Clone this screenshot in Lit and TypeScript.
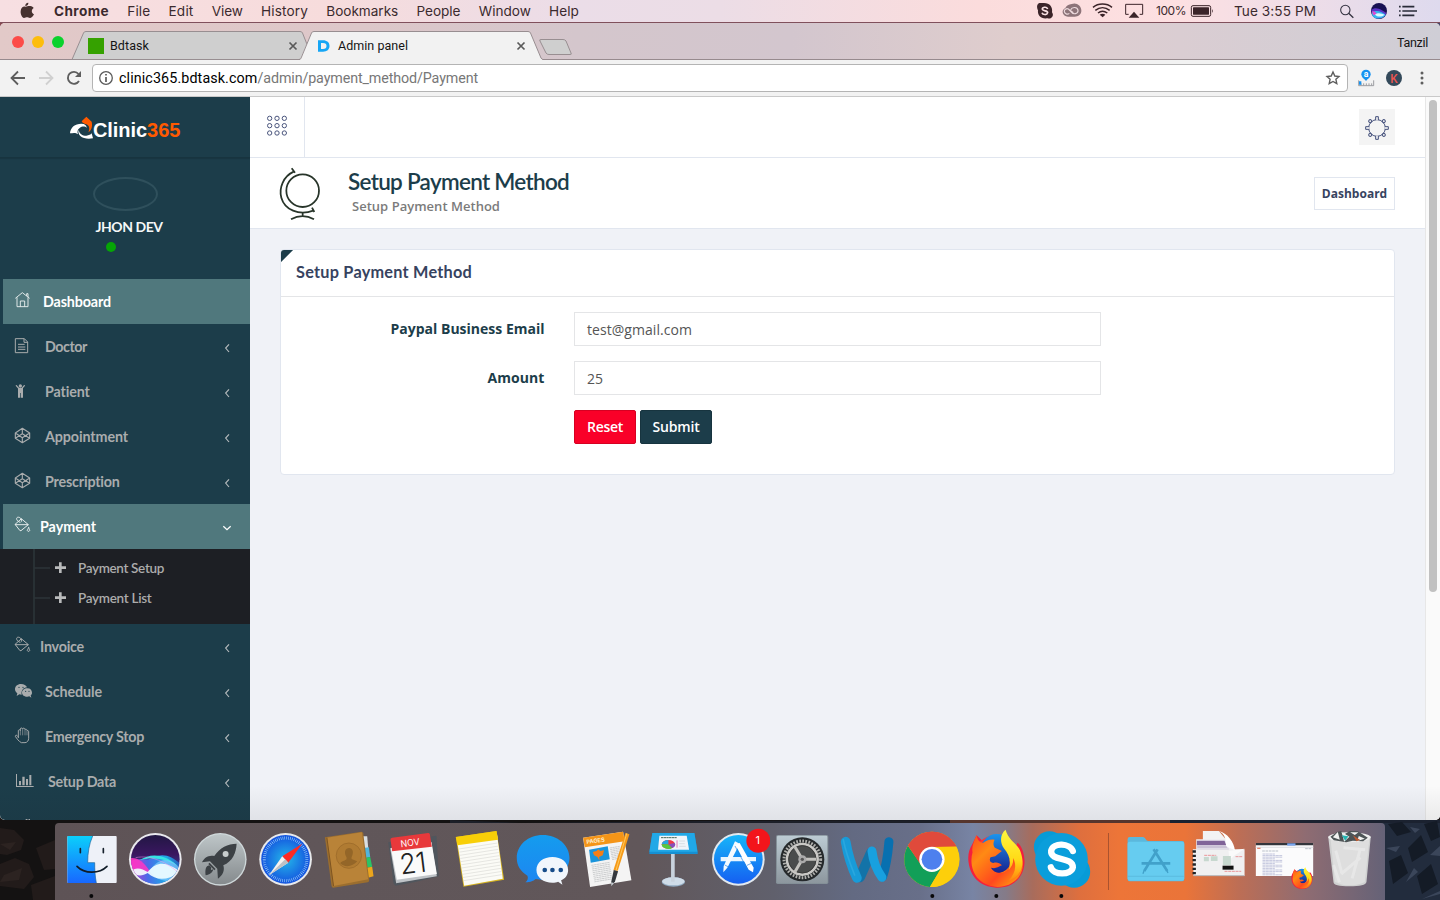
import { LitElement, html, svg, css } from "lit";
import { customElement } from "lit/decorators.js";

const MENUS: [string, number][] = [
  ["Chrome", 55], ["File", 23], ["Edit", 25], ["View", 31], ["History", 47],
  ["Bookmarks", 72], ["People", 44], ["Window", 52], ["Help", 30],
];

/* Artwork is drawn on a grid of three units per pixel. */
const art = (x: number, y: number, w: number, h: number, body: unknown, cls = "") => html`
  <svg class=${cls} width=${w} height=${h} viewBox="${x} ${y} ${w * 3} ${h * 3}" fill="none">${body}</svg>`;

const codepen = (dy: number) => svg`<g transform="translate(0 ${dy})" stroke="#a9acad" stroke-width="3.400" stroke-linejoin="round">
  <path d="M67 325 89 339V355L67 368 46 355V339ZM46 339 67 353 89 339M46 355 67 341 89 355M67 325V341M67 353V368M46 339V355M89 339V355"/></g>`;
const bucket = (dy: number, c: string) => svg`<g transform="translate(0 ${dy})" stroke=${c} stroke-width="2.900" stroke-linejoin="round" stroke-linecap="round">
  <path d="M65 597 85 614 63 632H60L46 614ZM46 614H84M60 607C54 605 49 600 50 595 51 590 61 590 64 598M64 598V604"/><path d="M86 623C83 628 82 630 82 632A4 4 0 0 0 89 632C89 630 88 627 86 623Z"/></g>`;

interface Row { t: string; x: number; w: number; vy: number; icon: unknown; active?: boolean; open?: boolean; arrow?: boolean }
const G = "#a9acad";
const ROWS: Row[] = [
  { t: "Dashboard", x: 43, w: 68, vy: 549, active: true, icon: svg`<path stroke="#e8efef" stroke-width="2.800" d="M46 607 67 590 89 607M51 604V632H84V604M61 632V615H74V632M80 600V593H84V603"/>` },
  { t: "Doctor", x: 45, w: 42, vy: 12, arrow: true, icon: svg`<path stroke=${G} stroke-width="3" d="M46 56H73L83 66V98H46ZM72 56V67H83"/><path stroke=${G} stroke-width="3" d="M54 73H74M54 81H76M54 88H76"/>` },
  { t: "Patient", x: 45, w: 45, vy: 147, arrow: true, icon: svg`<circle cx="61" cy="198" r="5" fill=${G}/><path stroke=${G} stroke-width="4" stroke-linecap="round" d="M49 197 57 206H65L73 197"/><path fill=${G} d="M54 204H69V233H62.500V219H60.500V233H54Z"/>` },
  { t: "Appointment", x: 45, w: 83, vy: 282, arrow: true, icon: codepen(0) },
  { t: "Prescription", x: 45, w: 75, vy: 417, arrow: true, icon: codepen(135) },
  { t: "Payment", x: 40, w: 56, vy: 552, active: true, open: true, arrow: true, icon: bucket(0, "#e8efef") },
  { t: "Invoice", x: 40, w: 44, vy: 237, arrow: true, icon: bucket(-315, G) },
  { t: "Schedule", x: 45, w: 57, vy: 372, arrow: true, icon: svg`<path fill=${G} d="M63 417C52 417 45 424 45 433 45 438 48 442 52 445L50 453 58 448C60 449 62 449 65 449 63 436 70 428 81 427 79 421 72 417 63 417Z"/><path fill=${G} d="M82 430C73 430 66 436 66 443S73 455 82 455L88 454 94 458 92 451C95 449 96 446 96 443 96 436 91 430 82 430Z"/><g fill="#1c3d4a"><circle cx="57" cy="427" r="2"/><circle cx="69" cy="427" r="2"/><circle cx="77" cy="439" r="1.8"/><circle cx="87" cy="439" r="1.8"/></g>` },
  { t: "Emergency Stop", x: 45, w: 99, vy: 507, arrow: true, icon: svg`<path stroke=${G} stroke-width="2.900" stroke-linejoin="round" stroke-linecap="round" d="M55 577V558C55 553 61 553 61 557V552C61 548 67 548 68 552 69 548 75 549 75 554 77 551 81 553 81 557 84 555 86 558 86 561V580C86 587 81 593 75 593H64C57 590 50 580 46 574 46 569 52 569 55 577Z"/><path stroke=${G} stroke-width="1.800" d="M61 557V571M68 552V571M75 554V571M81 558V571"/>` },
  { t: "Setup Data", x: 48, w: 68, vy: 642, arrow: true, icon: svg`<path fill=${G} d="M48 687H51V723H101V726H48ZM57 708H63V721H57ZM67 695H74V721H67ZM78 702H84V721H78ZM88 690H94V721H88Z"/>` },
];

const ffx = svg`
  <path fill="#f4203c" d="M741 61 727 90C719 103 714 120 717 142 722 184 751 216 800 218 852 220 883 185 885 143 886 119 877 92 864 83L848 122 788 105Z"/>
  <circle cx="800" cy="130" r="70" fill="url(#fxr)"/>
  <ellipse cx="801" cy="116" rx="51" ry="59" fill="url(#fxb)"/>
  <path fill="url(#fxo)" d="M741 61C744 76 750 82 760 84 769 77 782 71 795 74 791 82 790 91 796 98L817 108 797 124 783 127C778 136 782 143 791 144 801 141 810 143 817 151 804 157 798 162 784 158 790 169 802 176 818 173 838 169 842 151 840 134L859 99C881 126 888 156 868 185 839 225 778 224 748 193 727 172 721 140 729 112 726 100 731 82 741 61Z"/>
  <path fill="url(#fxy)" d="M828 44C812 58 810 80 823 100 838 118 847 139 837 165 848 155 852 142 851 129 863 154 856 178 837 197 874 184 887 151 874 113 866 86 838 79 828 44Z"/>`;

const DOCK: { cx: number; art: unknown; run?: boolean }[] = [
  { cx: 0, run: true, art: svg`<rect x="201" y="63" width="148" height="141" rx="3" fill="#eef1f8"/><path d="M204 63H277C266 88 262 114 262 143H283C283 164 284 184 288 204H204Q201 204 201 201V66Q201 63 204 63Z" fill="url(#fin)"/><path d="M277 63C266 88 262 114 262 143H283C283 164 284 184 288 204" stroke="#18649c" stroke-width="2"/><path d="M240 101V113M309 101V113" stroke="#16202c" stroke-width="5" stroke-linecap="round"/><path d="M230 154C252 177 297 177 320 154" stroke="#101c28" stroke-width="5" stroke-linecap="round"/>` },
  { cx: 0, art: svg`<circle cx="467" cy="133" r="79" fill="#e9e9ee"/><circle cx="467" cy="133" r="73" fill="url(#siri)"/><g clip-path="url(#siriclip)"><path d="M390 138C420 128 440 138 462 128 490 112 520 125 545 150V210H390Z" fill="url(#siriw)"/><path d="M390 130C412 126 432 140 450 168 430 180 410 184 390 178Z" fill="#ff37c4" opacity=".85"/><path d="M420 136C455 112 500 118 540 158 520 140 470 120 420 136Z" fill="#35e3e2"/><path d="M450 168C480 120 515 128 545 166V186C510 208 470 198 450 168Z" fill="#7cc8ff" opacity=".75"/><path d="M392 170C410 153 428 162 444 171 475 133 505 143 542 170 503 198 470 198 444 174 425 186 408 182 392 170Z" fill="#effdff" opacity=".92"/><path d="M408 128C455 118 505 145 535 172" stroke="#ff8bea" stroke-width="2" opacity=".7"/></g>` },
  { cx: 0, art: svg`<circle cx="661" cy="133" r="79" fill="#cfd8da"/><circle cx="661" cy="133" r="75" fill="url(#lp)"/><path fill="#3c4145" d="M710 86C684 86 659 98 643 123 626 119 613 128 606 142L630 139 652 161 654 191C669 181 675 166 670 151 698 139 709 113 710 86Z"/><circle cx="677" cy="117" r="9" fill="#c7cccd"/><path d="M628 151C617 153 615 165 617 181 629 179 638 173 640 163L633 165 634 157Z" fill="#3c4145"/><path d="M627 145 645 164" stroke="#3c4145" stroke-width="5"/>` },
  { cx: 0, art: svg`<circle cx="856" cy="133" r="79" fill="#e8eaec"/><circle cx="856" cy="133" r="73" fill="url(#saf)"/><circle cx="856" cy="133" r="64" stroke="#b9e5ff" stroke-width="9" stroke-dasharray="1.5 4.2"/><path d="M906 86 846 124 864 143Z" fill="#ff2a22"/><path d="M806 181 846 124 864 143Z" fill="#f6f3ef"/><path d="M806 181 855 133 864 143Z" fill="#bdc1c5"/>` },
  { cx: 0, art: svg`<path d="M1089 64H1103L1106 99 1092 102Z" fill="#d9dee2"/><path d="M1093 99 1108 97 1112 126 1097 130Z" fill="#51b5dc"/><path d="M1097 128 1112 126 1118 155 1099 158Z" fill="#2bc466"/><path d="M1101 158 1118 155 1122 184 1103 189Z" fill="#eba51d"/><path d="M976 67 1086 50Q1090 50 1091 55L1109 195Q1109 200 1105 202L1001 218Q997 218 996 213Z" fill="#9b6e2f"/><path d="M982 68 1087 52 1106 193 1002 213Z" fill="#b98338"/><path d="M982 68 1002 213" stroke="#7e5420" stroke-width="3"/><circle cx="1048" cy="122" r="38" stroke="#9c6b2a" stroke-width="2.500" fill="#b07b32"/><path d="M1022 145C1025 138 1036 138 1041 133V127C1031 109 1039 100 1048 99 1060 100 1064 111 1056 127V132L1073 139C1060 156 1034 158 1022 145Z" fill="#946628"/>` },
  { cx: 370, art: svg`<path d="M55 82 200 62 207 184Q140 202 77 212L71 206Z" fill="#50565d"/><path d="M61 100 184 80 201 184 79 205Z" fill="#bfc3c7"/><path d="M63 99 185 82 201 177 81 194Z" fill="#fafafa"/><path d="M62 74Q61 69 67 68L175 54Q179 54 180 58L186 95 67 109Z" fill="#e8393b"/><text x="122" y="93" transform="rotate(-7 122 93)" text-anchor="middle" font-family="Inter" font-size="28" textLength="57" lengthAdjust="spacingAndGlyphs" fill="#fff">NOV</text><text x="133" y="174" transform="rotate(-7 133 174)" text-anchor="middle" font-family="Inter" font-weight="300" font-size="84" textLength="80" lengthAdjust="spacingAndGlyphs" fill="#222">21</text>` },
  { cx: 370, art: svg`<path d="M257 66 379 48 402 194 280 215Z" fill="#d7b520"/><path d="M261 78 381 61 398 191 282 212Z" fill="#fbfbf6"/><path d="M257 66 379 48 384 74 262 91Z" fill="#f8cf08"/><g stroke="#d1d0cd" stroke-width="1.5">${Array.from({ length: 11 }, (_, i) => svg`<path d="M${266 + i * 1.4} ${102 + i * 9.5}L${382 + i * 1.3} ${84 + i * 9.5}"/>`)}</g>` },
  { cx: 370, art: svg`<path d="M520 60C476 60 442 90 442 129 442 152 454 170 474 182 477 191 474 197 468 202 484 202 493 197 499 192 551 203 600 173 600 129 600 90 564 60 520 60Z" fill="url(#msg)"/><path d="M549 126C522 126 501 142 501 165S522 203 549 203C556 203 561 202 566 200L579 209 575 196C589 190 596 179 596 165 596 142 576 126 549 126Z" fill="#f1f6fc"/><g fill="#164c8a"><circle cx="526" cy="165" r="7"/><circle cx="549" cy="165" r="7"/><circle cx="574" cy="165" r="7"/></g>` },
  { cx: 370, art: svg`<path d="M640 68 760 50 785 196 661 216Z" fill="#f4f4f4"/><path d="M640 68 760 50 765 79 645 97Z" fill="#f49518"/><text x="651" y="87" transform="rotate(-8 651 87)" font-family="Inter" font-weight="600" font-size="17" textLength="55" fill="#fff5dd">PAGES</text><path d="M658 104 714 94 720 133 663 143Z" fill="#1995dc"/><path d="M669 111 680 108 686 103 691 108 703 106 699 121 688 126 690 138 683 126 673 121Z" fill="#f57e16"/><g stroke="#b7b9bb" stroke-width="2" stroke-dasharray="7 1">${Array.from({ length: 8 }, (_, i) => svg`<path d="M${720 + i} ${99 + i * 5}L750 ${94 + i * 5}"/>`)}${Array.from({ length: 10 }, (_, i) => svg`<path d="M${665 + i} ${151 + i * 5.5}L${720 + i} ${142 + i * 5.5}"/>`)}</g><path d="M767 54 779 58 744 167 731 166Z" fill="#f69a18"/><path d="M771 55 739 165" stroke="#ffc85b" stroke-width="3"/><path d="M732 165 745 169 736 199 726 214 724 203Z" fill="#34383d"/><path d="M724 202 733 204 725 214Z" fill="#c9ced2"/>` },
  { cx: 370, art: svg`<ellipse cx="910" cy="201" rx="35" ry="14" fill="#90aac1"/><ellipse cx="910" cy="199" rx="34" ry="12" fill="#cfdce8"/><path d="M903 115H914V200H903Z" fill="#c8d2dd"/><path d="M847 54H973L983 111V117H838V111Z" fill="#1590d3"/><path d="M847 54H973L982 110H838Z" fill="#21a8e7"/><path d="M868 62H950L957 104H864Z" fill="#f1f5fa"/><path d="M873 68H920" stroke="#465" stroke-width="3" stroke-dasharray="7 1"/><ellipse cx="895" cy="88" rx="20" ry="13" fill="#ef394a"/><path d="M895 88V75A20 13 0 0 0 875 88Z" fill="#27a6e1"/><path d="M895 88H875A20 13 0 0 0 907 99Z" fill="#55c93f"/><path d="M895 88 907 99A20 13 0 0 0 914 84Z" fill="#8650bc"/><path d="M921 76V98" stroke="#e678b8" stroke-width="3"/><path d="M927 78H945M927 86H944M927 94H947" stroke="#cdd3d9" stroke-width="2"/>` },
  { cx: 730, art: svg`<circle cx="24" cy="133" r="79" fill="#e2e9ef"/><circle cx="24" cy="133" r="73" fill="url(#aps)"/><path d="M-29 126H77V139H-29Z" fill="#e8f5ff"/><path d="M14 79 28 86-9 158-21 172-20 153Z" fill="#f4faff"/><path d="M16 91 28 84 70 158 68 172 55 164Z" fill="#fff"/><path d="M14 93 52 164M-17 150-5 156M50 151 65 144" stroke="#2582df" stroke-width="2"/><circle cx="84" cy="77" r="36" fill="#f3151b"/><text x="82" y="88" text-anchor="middle" font-family="Inter" font-size="33" fill="#fff">1</text>` },
  { cx: 730, art: svg`<rect x="139" y="60" width="157" height="147" rx="5" fill="#849098"/><rect x="142" y="62" width="151" height="142" rx="4" fill="url(#sys)"/><circle cx="218" cy="133" r="66" fill="#25292b"/><circle cx="218" cy="133" r="55" stroke="#b0b0ad" stroke-width="9" stroke-dasharray="5 4.2"/><circle cx="218" cy="133" r="46" fill="#4a4c4c" stroke="#c9c8c5" stroke-width="8"/><circle cx="218" cy="133" r="41" stroke="#3a3b3a" stroke-width="3"/><path d="M218 133H260M218 133 196 96M218 133 196 170" stroke="#c2c1bd" stroke-width="9"/><circle cx="218" cy="133" r="12" fill="#aaa"/><circle cx="218" cy="133" r="5" fill="#555"/>` },
  { cx: 730, art: svg`<g stroke-linecap="round" stroke-linejoin="round"><path d="M423 113 390 187" stroke="#1373a8" stroke-width="30"/><path d="M477 80C474 117 469 153 458 185" stroke="#0870b0" stroke-width="27"/><path d="M347 80C354 120 365 156 381 189" stroke="#189bd8" stroke-width="29"/><path d="M426 108C430 139 440 165 456 187" stroke="#18a0df" stroke-width="27"/><path d="M340 74C347 112 360 145 374 180" stroke="#2aa7de" stroke-width="5"/></g>` },
  { cx: 730, run: true, art: svg`<circle cx="605" cy="133" r="83" fill="#fbce09"/><path d="M605 133 533 92A83 83 0 0 1 678 94L605 96Z" fill="#df4a3b"/><path d="M533 92A83 83 0 0 0 599 216L638 151 605 133 574 151Z" fill="#129f58"/><path d="M605 96H678A83 83 0 0 1 599 216L638 151Z" fill="#fdcf0b"/><path d="M533 92A83 83 0 0 1 678 94H605L572 150Z" fill="#e04a3b"/><circle cx="605" cy="133" r="38" fill="#fff"/><circle cx="605" cy="133" r="31" fill="#4d80ee"/>` },
  { cx: 730, run: true, art: ffx },
  { cx: 730, run: true, art: svg`<circle cx="959" cy="96" r="47" fill="#079bd7"/><circle cx="1033" cy="170" r="48" fill="#079bd7"/><circle cx="995" cy="133" r="79" fill="#0a9edb"/><path d="M1029 108C1021 85 970 81 964 107 960 141 1029 123 1029 157 1025 182 969 181 963 157" stroke="#fff" stroke-width="19" stroke-linecap="round"/>` },
];
const DOCK2: { cx: number; art: unknown }[] = [
  { cx: 1090, art: svg`<path d="M112 73Q112 66 119 66H158C166 66 166 78 175 78H276Q282 78 282 84V192Q282 199 276 199H118Q112 199 112 193Z" fill="#5bb8dd"/><path d="M112 86Q112 80 119 80H276Q282 80 282 87V190Q282 197 276 197H118Q112 197 112 190Z" fill="#66ccf0"/><path d="M113 184H281" stroke="#56b5d9" stroke-width="2"/><g stroke="#41a1ca" stroke-width="8"><path d="M154 145H240M202 103 162 168M190 103 231 168"/><path d="M162 166 158 176M230 166 233 174" stroke-width="4"/></g>` },
  { cx: 1090, art: svg`<path d="M340 48H388L436 105V173H340Z" fill="#f2f2f3"/><path d="M320 73H407L421 112V170H320Z" fill="#eceaf0"/><path d="M322 77H405L410 91H322Z" fill="#806498"/><path d="M323 96H413M323 103H418" stroke="#a99abb" stroke-width="3"/><path d="M310 103H465V183H312Z" fill="#f0f0f1"/><path d="M312 182H465" stroke="#b5b2b5" stroke-width="3"/><path d="M387 48C408 57 409 76 410 94L436 106C434 83 414 53 387 48Z" fill="#fff"/><path d="M417 108 465 101C450 112 428 123 420 137Z" fill="#fafafa"/><path d="M314 106V180" stroke="#202326" stroke-width="10" stroke-dasharray="7 6"/><path d="M344 121H380M405 169H455M438 125H459" stroke="#e9979a" stroke-width="3" stroke-dasharray="9 2"/><path d="M343 126H358V139H343ZM364 124H384V138H364ZM400 123H424V150H400Z" fill="#c7d8cf"/><path d="M399 152H432V164H399Z" fill="#111"/>` },
  { cx: 1090, art: svg`<path d="M498 84H670V183H498Z" fill="#fbfbfc"/><path d="M498 84H670V91H498Z" fill="#33353b"/><path d="M592 85H617V92H592Z" fill="#7ba7f1"/><path d="M498 97H670" stroke="#e3e4e7" stroke-width="4"/><path d="M502 100H512" stroke="#e5856d" stroke-width="4"/><path d="M517 108H567M646 101H665" stroke="#b9c0ca" stroke-width="3" stroke-dasharray="8 2"/><g stroke="#a9adcf" stroke-width="2" stroke-dasharray="9 1">${Array.from({ length: 14 }, (_, i) => svg`<path d="M518 ${117 + i * 4.8}H${i % 3 ? 578 : 555}"/>`)}</g><g transform="translate(336 140) scale(.375)">${ffx}</g>` },
  { cx: 1090, art: svg`<path d="M714 64H842L829 201Q826 214 778 214T730 201Z" fill="#cfd0d0"/><path d="M721 68H838L824 201Q804 211 778 211T734 200Z" fill="#dedede"/><ellipse cx="778" cy="67" rx="63" ry="15" fill="#eee"/><path d="M721 65 741 51 753 48 763 58 779 48 803 49 833 68 819 79 788 77 768 82 731 76Z" fill="#4d5456"/><path d="M728 67 743 51 749 74ZM754 50 778 65 762 80ZM780 52 805 52 794 60ZM806 63 824 71 801 78Z" fill="#f1f2f1"/><path d="M755 61 775 64 765 77Z" fill="#25b4b1"/><path d="M788 61 810 75 799 79Z" fill="#bb5931"/><path d="M737 107 755 174M753 177 811 128M760 98 825 104M811 100 786 190M730 150 748 202" stroke="#f4f4f4" stroke-width="9" opacity=".4"/>` },
];

@customElement("app-root")
export class AppRoot extends LitElement {
  static styles = css`
    :host { display: block; width: 1440px; height: 900px; overflow: hidden; font-family: "Open Sans", sans-serif; }
    * { box-sizing: border-box; }
    svg { display: block; flex: none; }
    .screen { display: flex; flex-direction: column; height: 900px; position: relative; background: linear-gradient(90deg, #884850, #96565b 60%, #48476a) top / 100% 60px no-repeat, #1d1918; }
    .menubar { height: 23px; display: flex; justify-content: space-between; background: linear-gradient(90deg, #f7dfe2 0, #f7dcdc 23%, #ebdde8 40%, #ecdde6 50%, #fbdcdc 68%, #fde0e2 82%, #dedaee 100%); border-bottom: 1px solid #80505c; color: #3b2a2e; font-family: "Inter", sans-serif; font-size: 13.6px; line-height: 22px; white-space: nowrap; }
    .menus { display: flex; gap: 18.25px; }
    .apple { margin-right: -1.25px; }
    .menus b { font-weight: 700; }
    .fit { display: inline-block; white-space: pre; }
    .status { display: grid; grid-template-columns: 26px 31px 31px 32px 38px 36px 106px 32px 30px 48px; }
    .pct { font-size: 12px; padding-left: 6px; }
    .clock { padding-left: 10px; }
    .window { height: 797px; border-radius: 5px; overflow: hidden; display: flex; flex-direction: column; position: relative; background: #f2f2f2; }
    .shade { position: absolute; left: 0; right: 0; bottom: 0; height: 34px; background: linear-gradient(rgba(20,20,25,0), rgba(20,20,25,.07)); }
    .strip { height: 37px; display: grid; background: linear-gradient(90deg, #e2c9c8 0, #ddc7c9 25%, #d4c6cc 40%, #d3c6ce 55%, #dfcdcd 70%, #dacdd2 82%, #cfced6 100%); font-family: "Roboto", sans-serif; font-size: 12.5px; line-height: 14px; color: #151515; }
    .strip > * { grid-area: 1 / 1; }
    .tabs { display: flex; padding: 16px 12px 0 110px; }
    .tab1 { width: 228px; }
    .person { margin-left: auto; margin-top: -3px; }
    .toolbar { height: 37px; border-bottom: 1px solid #c9c9c9; display: flex; padding-top: 4px; background: #f2f2f2; }
    .nav { margin-top: -4px; }
    .omni { width: 1256px; height: 28px; border: 1px solid #b4b4b4; border-radius: 4px; background: #fff; display: flex; line-height: 26px; font-family: "Roboto", sans-serif; font-size: 14.3px; color: #777; }
    .omni b { font-weight: 400; color: #000; }
    .star { margin-left: auto; }
    .page { flex: 1; min-height: 0; display: grid; grid-template-columns: 250px 1175px 15px; background: #f0f2f7; }
    .side { background: #1c3d4a; height: 723px; overflow: hidden; }
    .brand { height: 61px; display: flex; align-items: flex-start; border-bottom: 1px solid #17343f; box-shadow: 0 1px 1px rgba(0,0,0,.12); font: bold 20px/26px "Liberation Sans", sans-serif; color: #fff; padding-left: 69px; }
    .brandname { padding-top: 20px; margin-left: 0; }
    .brand em { font-style: normal; color: #ff5a00; }
    .user { height: 121px; display: flex; flex-direction: column; align-items: center; padding-top: 19px; }
    .avatar { width: 65px; height: 34px; border: 2px solid #2f505c; border-radius: 50%; margin-left: 1px; }
    .uname { font: bold 14px/16px "Lato", sans-serif; color: #f5f8f8; margin: 8px 0 0 8px; height: 16px; }
    .dot { width: 10px; height: 10px; border-radius: 50%; background: #06a506; margin: 7px 0 0 -28px; }
    .row { height: 45px; margin-left: 3px; display: flex; align-items: flex-start; font: bold 14.3px/45px "Lato", sans-serif; color: #a9acad; }
    .active { background: #50787d; color: #fff; }
    .arrow { margin-left: auto; }
    .icon { overflow: hidden; }
    .sub { height: 75px; background: #1d1f24; display: flex; }
    .links { font: 600 13.5px/30px "Lato", sans-serif; color: #acacac; padding-top: 4px; display: flex; flex-direction: column; align-items: flex-start; }
    .main { display: flex; flex-direction: column; }
    .top { height: 61px; background: #fff; border-bottom: 1px solid #e1e6ef; display: flex; justify-content: space-between; padding-right: 30px; }
    .toggle { width: 55px; border-right: 1px solid #e1e6ef; }
    .gear { width: 36px; height: 36px; background: #f4f4f4; margin-top: 12px; }
    .head { height: 71px; background: #fff; border-bottom: 1px solid #e1e6ef; display: flex; padding: 0 30px 0 27px; }
    .heads { padding: 9px 0 0 16px; }
    .title { font: 600 22.5px/30px "Lato", sans-serif; color: #1c3d4a; height: 30px; }
    .subtitle { font-size: 13px; line-height: 18px; font-weight: 600; color: #7b7b7b; padding-left: 4px; }
    .crumb { margin: 19px 0 0 auto; height: 33px; width: 81px; border: 1px solid #e1e6ef; font-weight: 700; font-size: 12px; line-height: 31px; text-align: center; color: #37435f; }
    .panel { margin: 20px 30px 0; height: 226px; background: #fff; border: 1px solid #e1e6ef; border-radius: 4px; overflow: hidden; }
    .phead { height: 47px; border-bottom: 1px solid #e4e5e7; display: flex; background: linear-gradient(135deg, #1c3d4a 8.2px, #fff 8.9px) 0 0 / 14px 14px no-repeat; padding: 9px 0 0 15px; font: 700 16.3px/26px "Lato", sans-serif; color: #37435f; }
    .form { display: grid; grid-template-columns: 263.5px 527px; column-gap: 29.5px; row-gap: 15px; padding-top: 15px; }
    .label { text-align: right; font-weight: 700; font-size: 14px; line-height: 34px; color: #1c3d4a; }
    .input { height: 34px; border: 1px solid #e4e5e7; padding-left: 12px; line-height: 34px; font-size: 14px; color: #555; }
    .btns { display: flex; gap: 4px; grid-column: 2; }
    .btn { height: 34px; border-radius: 2px; color: #fff; font-weight: 600; font-size: 14px; line-height: 32px; text-align: center; border: 1px solid #17343f; background: #1c3d4a; width: 72px; }
    .reset { width: 62px; background: #f90028; border-color: #d60022; }
    .scroll { background: #fafafa; border-left: 1px solid #e7e7e7; padding: 3px 0 0 3px; }
    .thumb { width: 8px; height: 492px; border-radius: 4px; background: #c1c1c1; }
    .desk { height: 80px; display: grid; grid-template-columns: 1440px; position: relative; z-index: 0; }
    .desk > * { grid-area: 1 / 1; }
    .dock { margin: 3px 55px 0; height: 77px; border-radius: 4px 4px 0 0; display: flex; padding-left: 3.65px; background: linear-gradient(90deg, #5e5356 0, #605659 20%, #61575a 44%, #60606c 54%, #636a82 60%, #686f89 65%, #7884a4 69%, #857b88 71.5%, #a86c5c 73.5%, #de6f3e 77%, #ed7538 80%, #ea7439 85%, #bd6e55 89%, #8f6c72 94%, #656277 100%); }
    .cell { width: 64.7px; }
  `;

  firstUpdated() {
    this.renderRoot.querySelectorAll<HTMLElement>("[data-w]").forEach((el) => {
      const n = (el.textContent ?? "").length;
      const gap = (Number(el.dataset.w) - el.getBoundingClientRect().width) / n;
      el.style.letterSpacing = `${gap.toFixed(3)}px`;
    });
  }

  fit(text: string, w: number) {
    return html`<span class="fit" data-w=${w}>${text}</span>`;
  }

  menubar() {
    const c = "#3b2429";
    return html`<div class="menubar">
      <div class="menus">
        ${art(0, 0, 37, 22, svg`<path fill="#46312f" d="M85 8C78 8 75 14 76 18 82 18 86 13 85 8ZM76 20C82 20 84 17 91 18 96 18 99 21 101 24 93 29 94 39 102 43 98 51 94 54 90 54 86 54 84 52 81 52S76 54 72 54C66 53 61 42 62 33 63 22 71 18 76 20Z"/>`, "apple")}
        ${MENUS.map(([t, w], i) => i ? this.fit(t, w) : html`<b>${this.fit(t, w)}</b>`)}
      </div>
      <div class="status">
        ${art(90, 0, 26, 22, svg`<path fill=${c} d="M118 9H130C149 8 159 21 156 37 164 48 153 59 143 55 122 58 112 45 114 31 110 22 110 13 118 9Z"/><path d="M143 27C139 18 126 22 127 28 129 35 143 30 143 38 141 46 128 45 126 38" stroke="#f8e0e2" stroke-width="5"/>`)}
        ${art(168, 0, 31, 22, svg`<path fill="#8d7479" d="M215 12C229 6 244 17 244 31 245 43 235 50 224 50H204C187 49 182 30 196 24 199 18 206 13 215 12Z"/><path d="M220 38 205 27C199 24 192 29 193 35S202 45 208 40M212 29C216 20 233 20 234 31S220 44 215 37L204 26" stroke="#eddadd" stroke-width="3.5"/>`)}
        ${art(261, 0, 31, 22, svg`<path d="M279 22C295 9 320 9 336 22M286 31C299 21 316 21 329 31M294 39C303 32 312 32 322 39" stroke=${c} stroke-width="4.5"/><path d="M299 44C304 40 311 40 316 44L308 52Z" fill=${c}/>`)}
        ${art(354, 0, 32, 22, svg`<path d="M386 43H377V13H428V43H419" stroke=${c} stroke-width="3"/><path d="M402 35 418 53H386Z" fill=${c}/>`)}
        <span class="pct">${this.fit("100%", 30)}</span>
        ${art(564, 0, 36, 22, svg`<rect x="574" y="17" width="58" height="32" rx="5" stroke=${c} stroke-width="3"/><rect x="579" y="22" width="48" height="22" rx="1" fill=${c}/><path d="M636 27Q641 33 636 39Z" fill=${c}/>`)}
        <span class="clock">${this.fit("Tue 3:55 PM", 82)}</span>
        ${art(990, 0, 32, 22, svg`<circle cx="1036" cy="30" r="14" stroke="#333240" stroke-width="3.2"/><path d="M1046 40 1060 53" stroke="#333240" stroke-width="4"/>`)}
        ${art(1086, 0, 30, 22, svg`<circle cx="1137" cy="33" r="24" fill="#171052"/><path d="M1114 30C1128 17 1148 31 1159 39A24 24 0 0 1 1118 47Z" fill="#5a35c8"/><path d="M1116 38C1130 29 1143 34 1157 45 1146 59 1126 59 1117 47Z" fill="#35b6ee"/><path d="M1116 34C1122 32 1128 36 1130 42L1120 46Z" fill="#e04ad0"/><path d="M1125 44C1133 36 1145 40 1154 44 1145 52 1132 51 1125 44Z" fill="#dcfaff"/>`)}
        ${art(1176, 0, 48, 22, svg`<path d="M1197 20H1202M1207 20H1243M1197 33H1202M1207 33H1251M1197 46H1202M1207 46H1243" stroke="#292b38" stroke-width="5"/>`)}
      </div>
    </div>`;
  }

  chrome() {
    return html`
      <div class="strip">
        <svg width="1440" height="37" viewBox="0 23 1440 37" fill="none">
          <path d="M0 59.5H1440" stroke="#978a8e"/>
          <circle cx="18" cy="42" r="6" fill="#fc4b48"/><circle cx="38" cy="42" r="6" fill="#fdbd0c"/><circle cx="58" cy="42" r="6" fill="#0bd22d"/>
          <path d="M72 59.500 83.500 33Q84 31.500 86 31.500H300Q302 31.500 302.500 33L313 59.500Z" fill="#cfcfcf" stroke="#988e91"/>
          <path d="M300 59.500 311.500 33Q312 31.500 314 31.500H528Q530 31.500 530.500 33L541 58Q542 59.500 543 59.500V61H300Z" fill="#f2f2f2"/>
          <path d="M299 59.500Q301 59.500 301.500 57L311.500 33Q312 31.500 314 31.500H528Q530 31.500 530.500 33L541 58Q542 59.500 543 59.500" stroke="#988e91"/>
          <path d="M541 39.500H563Q565 39.500 566 41L571 53Q572 54.500 570 54.500H549Q547 54.500 546 53L540 41Q539 39.500 541 39.500Z" fill="#cfcfcf" stroke="#988e91"/>
          <rect x="88" y="38" width="16" height="16" fill="#35a100"/>
          <path d="M289.500 42.500 296.500 49.500M296.500 42.500 289.500 49.500M517.500 42.500 524.500 49.500M524.500 42.500 517.500 49.500" stroke="#5a5a5a" stroke-width="1.7"/>
          <path fill-rule="evenodd" fill="#16a6f5" d="M318 40.300H323C327 40.300 329.500 42.500 329.500 46S327 51.700 323 51.700H318ZM321 43V49H323C325.500 49 326.500 48 326.500 46S325.500 43 323 43Z"/>
        </svg>
        <div class="tabs"><span class="tab1">${this.fit("Bdtask", 39)}</span>${this.fit("Admin panel", 70)}<span class="person">${this.fit("Tanzil", 31)}</span></div>
      </div>
      <div class="toolbar">
        <svg class="nav" width="92" height="36" viewBox="0 60 92 36" fill="none">
          <path d="M25 78H12M18 71.500 11.500 78 18 84.500" stroke="#5e5e5e" stroke-width="1.8"/>
          <path d="M39 78H52M46 71.500 52.500 78 46 84.500" stroke="#d0d0d0" stroke-width="1.8"/>
          <path d="M79 81A6 6 0 1 1 78.500 74" stroke="#5e5e5e" stroke-width="1.900"/><path d="M81 71V77H75Z" fill="#5e5e5e"/>
        </svg>
        <div class="omni">
          <svg width="26" height="26" viewBox="93 65 26 26" fill="none"><circle cx="106" cy="78" r="6.300" stroke="#5a5a5a" stroke-width="1.300"/><path d="M106 77V82M106 74V75.600" stroke="#5a5a5a" stroke-width="1.700"/></svg>
          <b>${this.fit("clinic365.bdtask.com", 138.5)}</b>${this.fit("/admin/payment_method/Payment", 220.5)}
          <svg class="star" width="26" height="26" viewBox="1321 65 26 26" fill="none"><path d="M1333 72 1334.800 76 1339 76.500 1335.900 79.300 1336.800 83.700 1333 81.500 1329.200 83.700 1330.100 79.300 1327 76.500 1331.200 76Z" stroke="#5e5e5e" stroke-width="1.400"/></svg>
        </div>
        ${art(1044, 192, 92, 28, svg`<circle cx="1098" cy="223" r="14" fill="#1693f1"/><text x="1098" y="231" text-anchor="middle" font-family="Roboto" font-weight="700" font-size="26" fill="#fff">a</text><path d="M1090 234H1106L1098 243Z" fill="#1693f1"/><path d="M1076 241V257H1121V241M1083 256V250M1091 256V250M1099 256V250M1107 256V250M1115 256V250" stroke="#8a8d91" stroke-width="2.500"/><path d="M1077 244H1084V254H1077Z" fill="#1693f1"/><circle cx="1182" cy="234" r="24" fill="#33495a"/><text x="1182" y="248" text-anchor="middle" font-family="Roboto" font-weight="500" font-size="38" textLength="22" lengthAdjust="spacingAndGlyphs" fill="#ee5651">K</text><g fill="#5e5e5e"><circle cx="1266" cy="219" r="4.500"/><circle cx="1266" cy="234" r="4.500"/><circle cx="1266" cy="249" r="4.500"/></g>`)}
      </div>`;
  }

  side() {
    return html`<div class="side">
      <div class="brand">
        ${art(207, 3, 24, 60, svg`<path d="M259 62 275 77C278 90 275 103 265 109 270 98 268 88 259 85 252 83 246 80 245 76Z" fill="#ff5a00"/><path d="M210 112C211 94 225 83 244 83 255 83 260 88 260 96 256 91 247 90 239 96 232 101 231 108 234 115 227 109 219 111 210 112Z" fill="#fff"/><path d="M236 101C238 113 247 119 259 119 267 118 272 116 275 112L279 127C265 130 249 128 241 120 235 113 234 107 236 101Z" fill="#fff"/>`)}
        <span class="brandname">${this.fit("Clinic", 54)}<em>${this.fit("365", 33.500)}</em></span>
      </div>
      <div class="user">
        <div class="avatar"></div>
        <div class="uname">${this.fit("JHON DEV", 67)}</div>
        <div class="dot"></div>
      </div>
      ${ROWS.map((r) => html`
        <div class="row ${r.active ? "active" : ""}">
          ${art(9, r.vy, r.x - 3, 45, r.icon, "icon")}
          ${this.fit(r.t, r.w)}
          ${r.arrow ? art(657, 12, 31, 45, r.open
            ? svg`<path d="M670 79 681 89 692 79" stroke="#fff" stroke-width="3.800"/>`
            : svg`<path d="M687 73 677 84 687 96" stroke="#b5babc" stroke-width="3.500"/>`, "arrow") : ""}
        </div>
        ${r.open ? html`<div class="sub">
          ${art(0, 12, 78, 75, svg`<path d="M102 12V237M102 69H150M102 159H150" stroke="#2c3438" stroke-width="5"/><path d="M165 68H198M181 52V84M165 158H198M181 142V174" stroke="#b9babb" stroke-width="8"/>`)}
          <div class="links">${this.fit("Payment Setup", 86)}${this.fit("Payment List", 73.500)}</div>
        </div>` : ""}`)}
      ${art(0, 777, 60, 16, svg`<path d="M77 822H82V824H86V822H90V827H77Z" fill="#a9acad"/>`)}
    </div>`;
  }

  main() {
    const teeth = [0, 45, 90, 135, 180, 225, 270, 315];
    return html`<div class="main">
      <div class="top">
        <div class="toggle">${art(0, 3, 54, 60, svg`<g stroke="#4a557d" stroke-width="3">${[67, 89, 111].map((y) => [59, 81, 103].map((x) => svg`<circle cx=${x} cy=${y} r="6.500"/>`))}</g>`)}</div>
        <div class="gear">${art(1077, 327, 36, 36, svg`<g stroke="#44507b" stroke-width="3"><circle cx="1131" cy="384" r="25"/>${teeth.map((a) => a % 90
          ? svg`<circle cx="1131" cy="355" r="4.500" fill="#f4f4f4" transform="rotate(${a} 1131 384)"/>`
          : svg`<path d="M1127 360V350H1135V360" fill="#f4f4f4" transform="rotate(${a} 1131 384)"/>`)}</g>`)}</div>
      </div>
      <div class="head">
        ${art(81, 186, 55, 70, svg`<g stroke="#28352a" stroke-width="5.300"><circle cx="158" cy="284" r="49"/><path d="M131 227C100 241 86 276 94 305 104 341 146 360 190 344M125 217 135 230M186 335 193 348M158 349V363M123 370C145 358 170 358 192 370"/></g>`)}
        <div class="heads">
          <div class="title">${this.fit("Setup Payment Method", 221)}</div>
          <div class="subtitle">${this.fit("Setup Payment Method", 148)}</div>
        </div>
        <div class="crumb">${this.fit("Dashboard", 65.500)}</div>
      </div>
      <div class="panel">
        <div class="phead">${this.fit("Setup Payment Method", 176)}</div>
        <div class="form">
          <div class="label">${this.fit("Paypal Business Email", 154)}</div><div class="input">${this.fit("test@gmail.com", 105)}</div>
          <div class="label">${this.fit("Amount", 57)}</div><div class="input">${this.fit("25", 16)}</div>
          <div class="btns"><div class="btn reset">${this.fit("Reset", 36)}</div><div class="btn">${this.fit("Submit", 47)}</div></div>
        </div>
      </div>
    </div>`;
  }

  desk() {
    const left = 58.65, second = 1122.75, step = 64.7;
    const stop = (o: number, c: string) => svg`<stop offset=${o} stop-color=${c}/>`;
    const icon = (d: { cx: number; art: unknown; run?: boolean }, x: number) => html`
      <svg class="cell" width="64.7" height="77" viewBox="${(x - d.cx) * 3} 24 194.1 231" fill="none">${d.art}
      ${d.run ? svg`<circle cx=${(x - d.cx) * 3 + 97} cy="243" r="6" fill="#080809"/>` : ""}</svg>`;
    const shared = svg`<defs>
      <linearGradient id="fin" x2="0" y2="1">${stop(0, "#0bcffb")}${stop(1, "#1868ff")}</linearGradient>
      <linearGradient id="lp" x2="0" y2="1">${stop(0, "#bec6c8")}${stop(1, "#858a8d")}</linearGradient>
      <radialGradient id="saf">${stop(0, "#24b7e9")}${stop(1, "#1454df")}</radialGradient>
      <linearGradient id="siri" x2="0" y2="1">${stop(0, "#221743")}${stop(0.4, "#3a1760")}${stop(1, "#2a62cc")}</linearGradient>
      <linearGradient id="siriw" x2="1" y2="0">${stop(0, "#d52fd0")}${stop(0.35, "#4a6be8")}${stop(0.7, "#1fa9e6")}${stop(1, "#2a54b8")}</linearGradient>
      <clipPath id="siriclip"><circle cx="467" cy="133" r="73"/></clipPath>
      <linearGradient id="msg" x2="0" y2="1">${stop(0, "#149cee")}${stop(1, "#1d86f1")}</linearGradient>
      <linearGradient id="aps" x2="0" y2="1">${stop(0, "#16b5f9")}${stop(1, "#155ff1")}</linearGradient>
      <linearGradient id="sys" x2="0" y2="1">${stop(0, "#bccbd3")}${stop(1, "#8d979e")}</linearGradient>
      <linearGradient id="fxr" x2="1" y2="1">${stop(0, "#fb2a40")}${stop(0.5, "#ff4b22")}${stop(1, "#ffa800")}</linearGradient>
      <linearGradient id="fxb" x2="0" y2="1">${stop(0, "#1a94ed")}${stop(1, "#19218e")}</linearGradient>
      <linearGradient id="fxo" x2="1" y2="1">${stop(0, "#ff4b1d")}${stop(0.3, "#ff8a14")}${stop(0.65, "#ff481e")}${stop(1, "#ffb50b")}</linearGradient>
      <linearGradient id="fxy" x2="0" y2="1">${stop(0, "#fff83f")}${stop(0.6, "#ffd916")}${stop(1, "#ff850f")}</linearGradient>
    </defs>`;
    return html`<div class="desk">
      <svg width="1440" height="80" viewBox="0 820 1440 80">${shared}
        <rect y="820" width="1440" height="80" fill="#141212"/>
        <path d="M0 828 14 830 24 840 21 850 7 855 0 854ZM0 864 15 858 29 864 34 877 24 889 0 886ZM36 848 55 840V869L44 870ZM31 885 55 876V900H33Z" fill="#221b1a"/>
        <path d="M0 844 16 842 10 850ZM4 875 22 868 19 880 0 882Z" fill="#2c2321"/>
        <path d="M450 820 520 823 700 821 950 820V824H450Z" fill="#1c1f28"/><path d="M950 820H1170L1330 824H950Z" fill="#56352d"/>
        <path d="M1170 820H1440V824H1170Z" fill="#1b2230"/>
        <path d="M1370 823H1440V900H1370Z" fill="#222c3d"/>
        <path d="M1388 824 1402 822 1411 832 1397 836ZM1408 848 1421 835 1428 852 1412 862ZM1424 824 1437 821 1440 837 1431 841ZM1389 861 1401 855 1408 873 1393 884ZM1417 876 1431 864 1438 884 1422 894Z" fill="#141b26"/>
        <path d="M1410 827 1420 829 1415 833ZM1386 848 1400 846 1396 852ZM1406 882 1414 868 1418 872ZM1430 855 1440 846V856ZM1422 899 1440 891V894Z" fill="#3b465a"/>
      </svg>
      <div class="dock">
        ${DOCK.map((d, i) => icon(d, left + i * step))}
        <svg width="28.9" height="77" viewBox="0 0 28.9 77"><path d="M14.500 10V67" stroke="#a9522f"/></svg>
        ${DOCK2.map((d, i) => icon(d, second + i * step))}
      </div>
    </div>`;
  }

  render() {
    return html`<div class="screen">
      ${this.menubar()}
      <div class="window">
        ${this.chrome()}
        <div class="page">${this.side()}${this.main()}<div class="scroll"><div class="thumb"></div></div></div>
        <div class="shade"></div>
      </div>
      ${this.desk()}
    </div>`;
  }
}
